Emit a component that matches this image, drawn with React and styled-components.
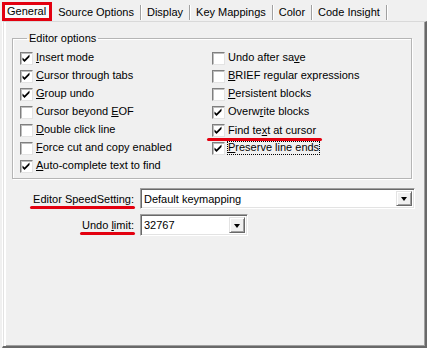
import React from 'react';
import styled, { createGlobalStyle, css } from 'styled-components';

const colors = {
  face: '#F0F0F0',
  light: '#FFFFFF',
  shadow: '#A0A0A0',
  darkShadow: '#696969',
  text: '#000000',
  mark: '#E3000F',
};

const GlobalStyle = createGlobalStyle`
  html, body {
    margin: 0;
    padding: 0;
    background: ${colors.face};
  }
  body {
    font-family: "Liberation Sans", Arial, sans-serif;
    font-size: 11px;
    color: ${colors.text};
  }
`;

const Window = styled.div`
  width: 427px;
  height: 348px;
  display: flex;
  flex-direction: column;
  background: ${colors.face};
  overflow: hidden;
`;

const TabStrip = styled.div`
  height: 21px;
  display: flex;
  align-items: flex-start;
  padding-left: 2px;
  box-sizing: border-box;
`;

const Tab = styled.div`
  height: 15px;
  margin-top: 5px;
  line-height: 14px;
  padding: 0 6px 0 6px;
  border-right: 1px solid ${colors.shadow};
  box-shadow: 1px 0 0 ${colors.light};
  white-space: nowrap;

  ${props => props.active && css`
    height: 19px;
    margin-top: 2px;
    line-height: 13px;
    padding: 0 3px 0 2px;
    border: 3px solid ${colors.mark};
    box-sizing: border-box;
    background: #FAFAFA;
    box-shadow: none;
    position: relative;
    z-index: 1;
  `}
`;

const Panel = styled.div`
  flex: 1;
  margin-left: 2px;
  border-top: 1px solid #D9D9D9;
  border-left: 1px solid ${colors.light};
  border-right: 2px solid ${colors.darkShadow};
  border-bottom: 2px solid ${colors.darkShadow};
  box-shadow: inset 1px 0 0 #E3E3E3, inset 3px 0 0 ${colors.light}, inset -1px -1px 0 ${colors.shadow};
  padding: 10px 10px 0 9px;
  display: flex;
  flex-direction: column;
`;

const GroupBox = styled.fieldset`
  margin: 0;
  width: 400px;
  height: 147px;
  box-sizing: border-box;
  border: 1px solid #B5B5B5;
  box-shadow: inset 1px 1px 0 ${colors.light}, 1px 1px 0 ${colors.light};
  padding: 4px 7px 0 7px;

  & legend {
    padding: 0 2px;
    margin-left: 7px;
    line-height: 13px;
  }
`;

const OptionGrid = styled.div`
  display: grid;
  grid-template-columns: 192px 1fr;
  grid-template-rows: repeat(7, 18px);
`;

const OptionRow = styled.label`
  display: flex;
  align-items: center;
  height: 18px;
  grid-column: ${props => props.col};
  grid-row: ${props => props.row};
`;

const Box = styled.span`
  width: 13px;
  height: 13px;
  box-sizing: border-box;
  background: ${colors.light};
  border: 1px solid;
  border-color: #7F7F7F #E3E3E3 #E3E3E3 #7F7F7F;
  box-shadow: inset 1px 1px 0 #BEBEBE;
  margin-right: 2px;
  flex: none;
  display: flex;

  & svg {
    display: block;
  }
`;

const OptionText = styled.span`
  border: 1px ${props => props.focused ? 'dotted #000' : 'solid transparent'};
  line-height: 11px;
  padding: 0 0 1px 0;
  white-space: nowrap;
`;

const Marked = styled.span`
  position: relative;

  &::after {
    content: '';
    position: absolute;
    left: ${props => props.left || -3}px;
    right: ${props => props.right || -4}px;
    bottom: ${props => props.bottom || -4}px;
    height: 3px;
    border-radius: 2px;
    background: ${colors.mark};
  }
`;

const Settings = styled.div`
  margin-top: 9px;
  display: grid;
  grid-template-columns: 122px auto;
  column-gap: 6px;
  row-gap: 5px;
  align-items: center;
`;

const FieldLabel = styled.span`
  text-align: right;
  white-space: nowrap;
`;

const Combo = styled.div`
  width: ${props => props.width}px;
  height: ${props => props.height || 21}px;
  box-sizing: border-box;
  background: ${colors.light};
  border: 1px solid;
  border-color: ${colors.shadow} ${colors.light} ${colors.light} ${colors.shadow};
  box-shadow: inset 1px 1px 0 ${colors.darkShadow}, inset -1px -1px 0 #E3E3E3;
  display: flex;
  align-items: center;
  padding: 2px 2px 2px 3px;
`;

const ComboValue = styled.span`
  flex: 1;
`;

const ArrowButton = styled.span`
  width: 16px;
  height: 100%;
  box-sizing: border-box;
  background: ${colors.face};
  border: 1px solid;
  border-color: #E3E3E3 ${colors.darkShadow} ${colors.darkShadow} #E3E3E3;
  box-shadow: inset 1px 1px 0 ${colors.light}, inset -1px -1px 0 ${colors.shadow};
  display: flex;
  align-items: center;
  justify-content: center;

  &::before {
    content: '';
    border-left: 3.5px solid transparent;
    border-right: 3.5px solid transparent;
    border-top: 4px solid #000;
    margin-top: 1px;
  }
`;

const Check = () => (
  <svg width="11" height="11" viewBox="0 0 11 11">
    <polygon points="1.5,4.5 3.5,6.5 8.5,1.5 8.5,4 3.5,9 1.5,7" fill="#000" />
  </svg>
);

// label text with a mnemonic underline at index `at`
const Mnemonic = ({ text, at }) => {
  if (at == null) return text;
  return (
    <>
      {text.slice(0, at)}
      <u>{text[at]}</u>
      {text.slice(at + 1)}
    </>
  );
};

const leftOptions = [
  { text: 'Insert mode', at: 0, checked: true },
  { text: 'Cursor through tabs', at: 0, checked: true },
  { text: 'Group undo', at: 0, checked: true },
  { text: 'Cursor beyond EOF', at: 14, checked: false },
  { text: 'Double click line', at: 0, checked: false },
  { text: 'Force cut and copy enabled', at: 0, checked: false },
  { text: 'Auto-complete text to find', at: 0, checked: true },
];

const rightOptions = [
  { text: 'Undo after save', at: 13, checked: false },
  { text: 'BRIEF regular expressions', at: 0, checked: false },
  { text: 'Persistent blocks', at: 0, checked: false },
  { text: 'Overwrite blocks', at: 5, checked: true },
  { text: 'Find text at cursor', at: 7, checked: true, marked: true },
  { text: 'Preserve line ends', at: 0, checked: true, focused: true },
];

const tabs = ['General', 'Source Options', 'Display', 'Key Mappings', 'Color', 'Code Insight'];

const Option = ({ opt, col, row }) => {
  const label = (
    <OptionText focused={opt.focused}>
      <Mnemonic text={opt.text} at={opt.at} />
    </OptionText>
  );
  return (
    <OptionRow col={col} row={row}>
      <Box>{opt.checked && <Check />}</Box>
      {opt.marked ? <Marked left={-20} right={-5} bottom={-5}>{label}</Marked> : label}
    </OptionRow>
  );
};

export default function App() {
  return (
    <>
      <GlobalStyle />
      <Window>
        <TabStrip>
          {tabs.map((t, i) => (
            <Tab key={t} active={i === 0}>{t}</Tab>
          ))}
        </TabStrip>
        <Panel>
          <GroupBox>
            <legend>Editor options</legend>
            <OptionGrid>
              {leftOptions.map((o, i) => (
                <Option key={o.text} opt={o} col={1} row={i + 1} />
              ))}
              {rightOptions.map((o, i) => (
                <Option key={o.text} opt={o} col={2} row={i + 1} />
              ))}
            </OptionGrid>
          </GroupBox>
          <Settings>
            <FieldLabel>
              <Marked left={-3} right={-1}>Editor SpeedSetting:</Marked>
            </FieldLabel>
            <Combo width={275}>
              <ComboValue>Default keymapping</ComboValue>
              <ArrowButton />
            </Combo>
            <FieldLabel>
              <Marked left={-2} right={-1}>Undo <Mnemonic text="limit:" at={0} /></Marked>
            </FieldLabel>
            <Combo width={108} height={22}>
              <ComboValue>32767</ComboValue>
              <ArrowButton />
            </Combo>
          </Settings>
        </Panel>
      </Window>
    </>
  );
}
